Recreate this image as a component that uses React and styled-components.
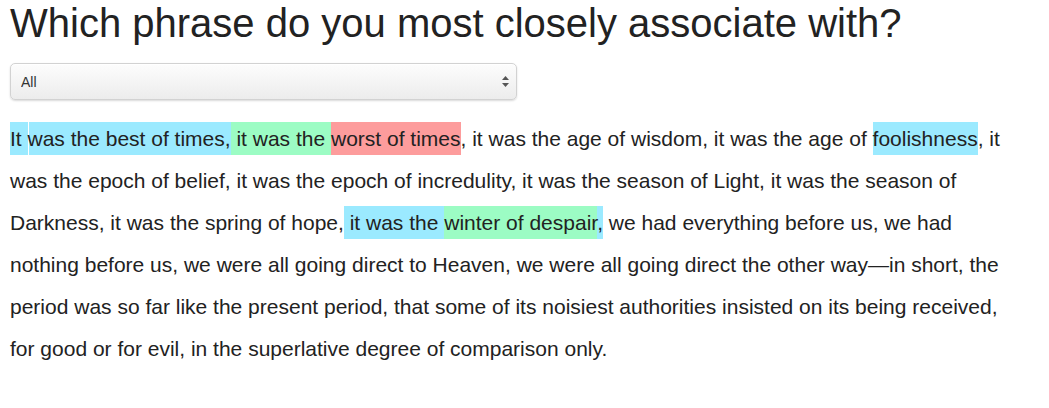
import React from 'react';
import styled, { createGlobalStyle } from 'styled-components';

const GlobalStyle = createGlobalStyle`
    body {
        margin: 0;
        background: #ffffff;
        font-family: "Liberation Sans", Arial, sans-serif;
        color: #222222;
    }
`;

const Page = styled.div`
    padding: 0 10px;
`;

const Title = styled.h1`
    margin: 0;
    font-size: 40px;
    font-weight: 400;
    line-height: 46px;
    color: #222222;
`;

const SelectWrap = styled.div`
    position: relative;
    width: 507px;
    margin-top: 17px;
`;

const Select = styled.select`
    appearance: none;
    -webkit-appearance: none;
    width: 100%;
    height: 37px;
    padding: 0 10px;
    font-family: "Liberation Sans", Arial, sans-serif;
    font-size: 14px;
    color: #333333;
    border: 1px solid #d2d2d2;
    border-radius: 5px;
    background: linear-gradient(180deg, #fdfdfd 0%, #ececec 100%);
    box-shadow: 0 1px 2px rgba(0, 0, 0, 0.15), inset 0 1px 0 #ffffff;
    outline: none;
`;

const Arrows = styled.svg`
    position: absolute;
    right: 7px;
    top: 12px;
    pointer-events: none;
`;

const Passage = styled.p`
    margin: 18px 0 0 0;
    font-size: 21px;
    line-height: 42px;
    color: #222222;
    max-width: 1010px;
`;

const tones = {
    blue: '#9beaff',
    green: '#9cfcc4',
    red: '#fd9c9c',
};

const Mark = styled.span`
    background: ${props => tones[props.tone]};
    padding: 5px 0 5px 0;
    box-shadow: ${props => props.split ? 'inset 1px 0 0 #ffffff' : 'none'};
`;

export default function App() {
    return (
        <Page>
            <GlobalStyle />
            <Title>Which phrase do you most closely associate with?</Title>
            <SelectWrap>
                <Select defaultValue="all">
                    <option value="all">All</option>
                    <option value="best">Best of times</option>
                    <option value="worst">Worst of times</option>
                </Select>
                <Arrows width="9" height="13" viewBox="0 0 9 13">
                    <path d="M4.5 1 L8 5 L1 5 Z" fill="#555555" />
                    <path d="M4.5 12 L8 8 L1 8 Z" fill="#555555" />
                </Arrows>
            </SelectWrap>
            <Passage>
                <Mark tone="blue">It </Mark><Mark tone="blue" split>was the best of times,</Mark><Mark tone="green"> it was the </Mark><Mark tone="red">worst of times</Mark>, it was the age of wisdom, it was the age of <Mark tone="blue">foolishness</Mark>, it was the epoch of belief, it was the epoch of incredulity, it was the season of Light, it was the season of Darkness, it was the spring of hope,<Mark tone="blue"> it was the <Mark tone="green">winter of despair</Mark>,</Mark> we had everything before us, we had nothing before us, we were all going direct to Heaven, we were all going direct the other way—in short, the period was so far like the present period, that some of its noisiest authorities insisted on its being received, for good or for evil, in the superlative degree of comparison only.
            </Passage>
        </Page>
    );
}
